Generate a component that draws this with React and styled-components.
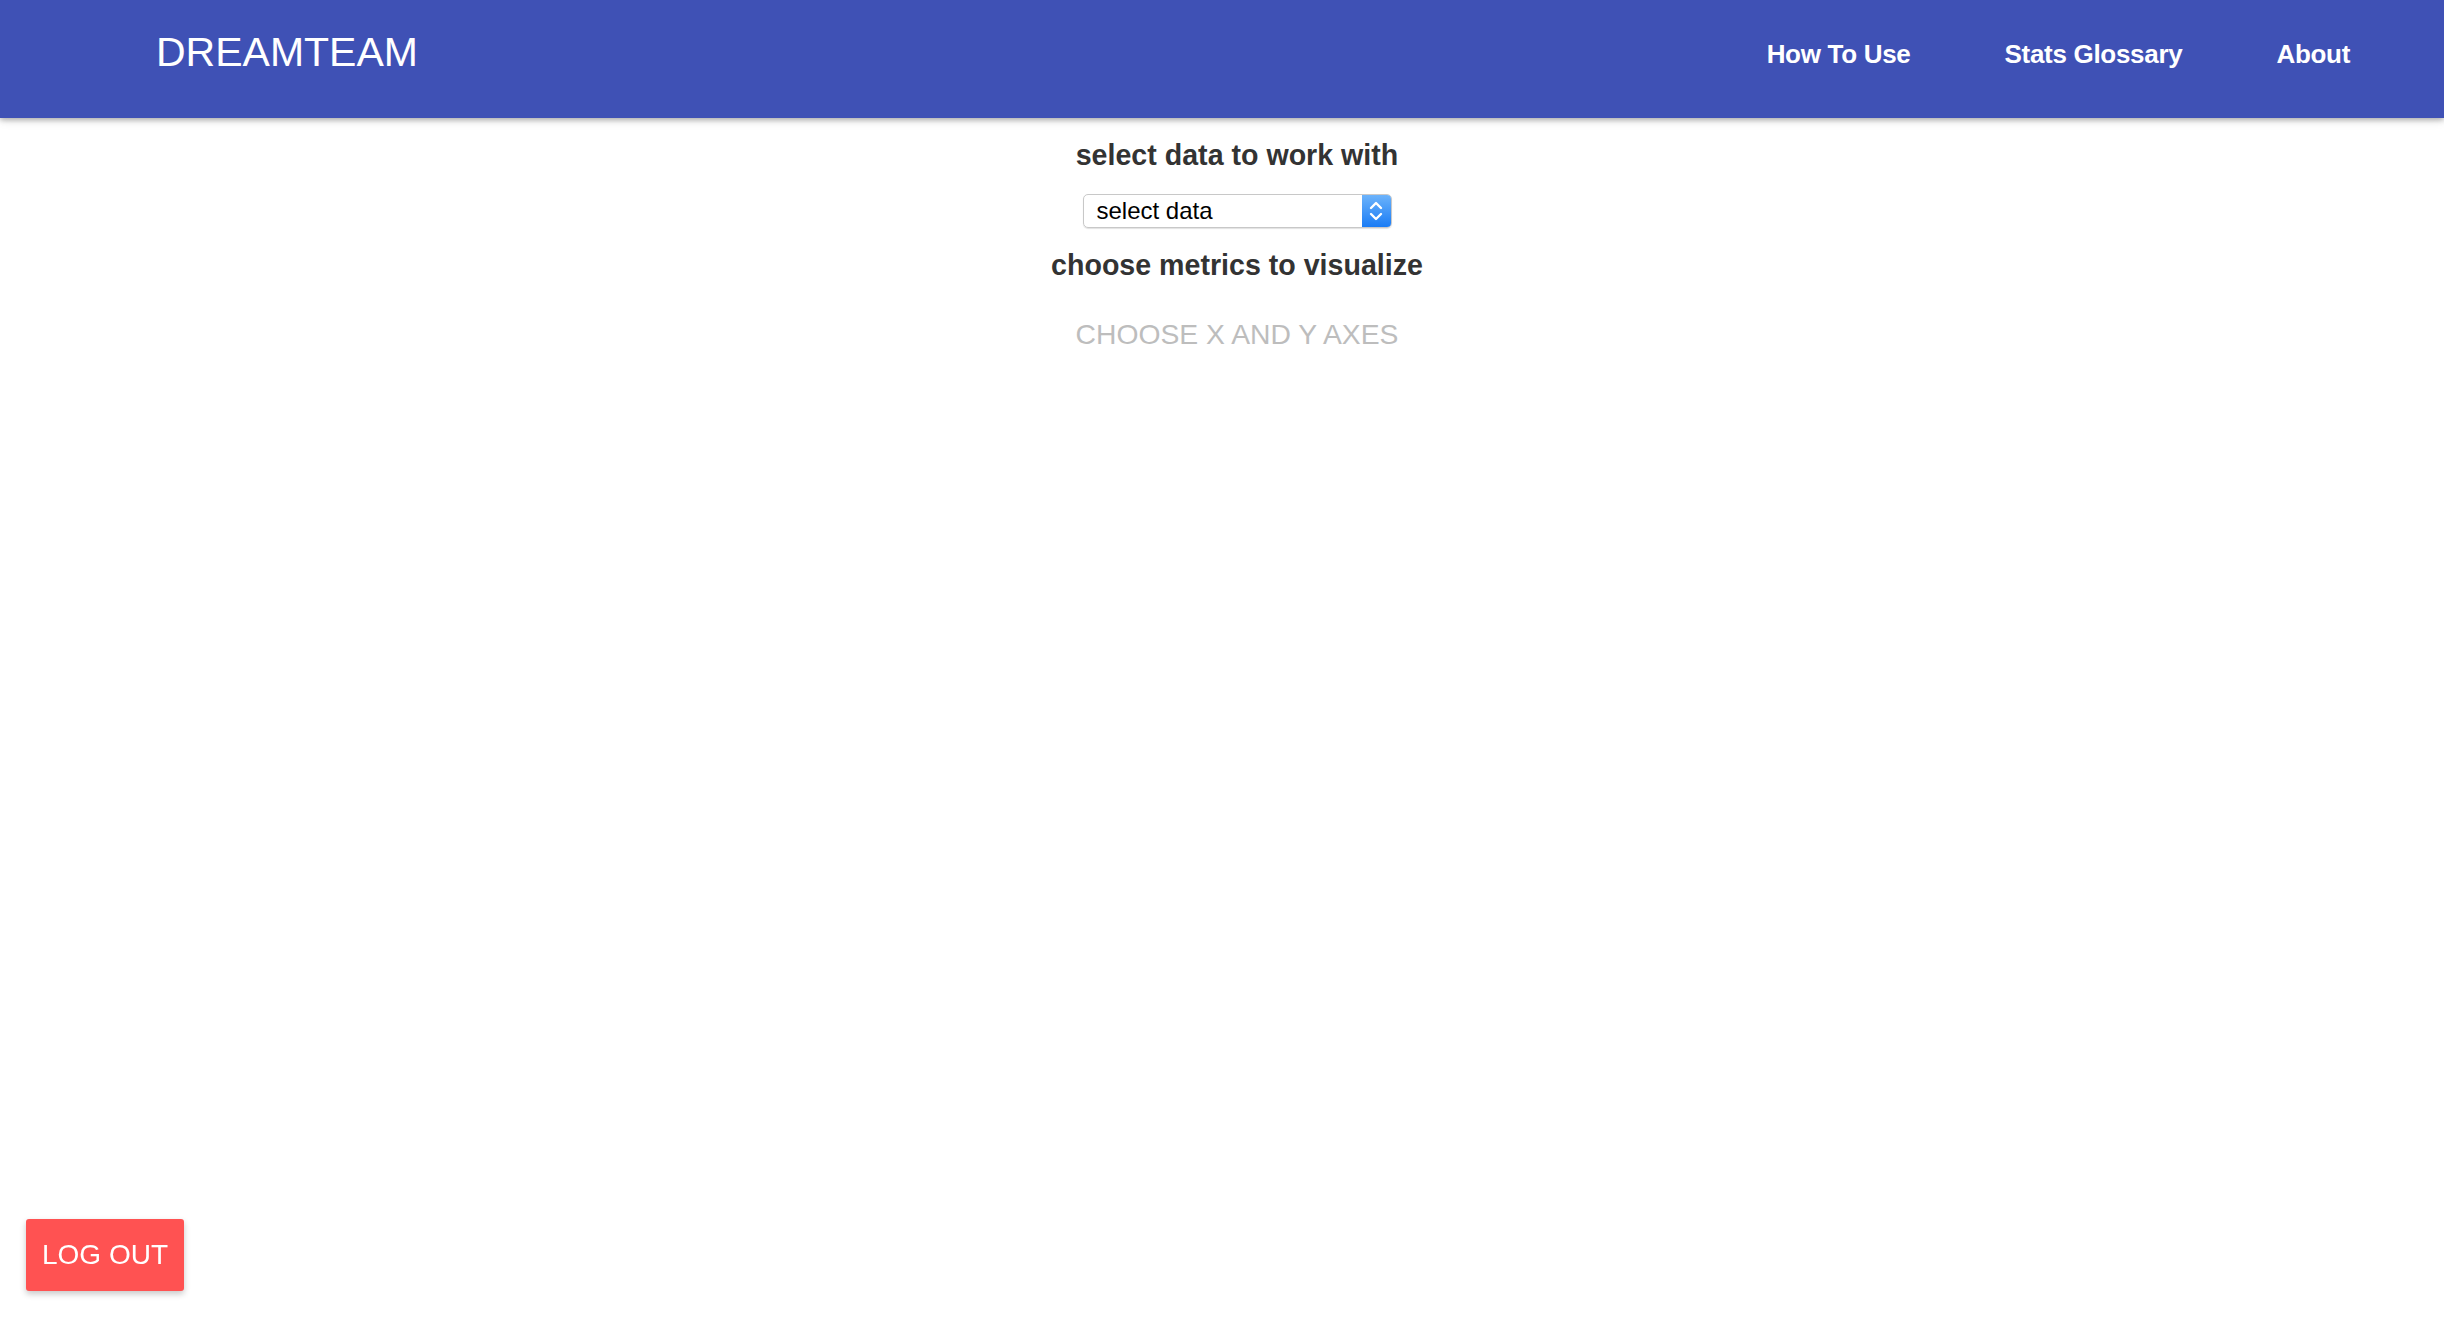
import React from "react";
import styled, { createGlobalStyle } from "styled-components";

const GlobalStyle = createGlobalStyle`
  html, body {
    margin: 0;
    padding: 0;
    background: #fff;
    font-family: "Liberation Sans", Arial, Helvetica, sans-serif;
  }
`;

const Nav = styled.nav`
  height: 118px;
  background-color: #3f51b5;
  box-shadow: 0 2px 5px rgba(0, 0, 0, 0.26), 0 2px 10px rgba(0, 0, 0, 0.12);
  display: flex;
  align-items: center;
  justify-content: space-between;
  padding: 0 47px 0 156px;
  color: #fff;
`;

const Brand = styled.a`
  font-size: 41px;
  color: #fff;
  text-decoration: none;
  margin-top: -14px;
`;

const Links = styled.ul`
  display: flex;
  list-style: none;
  margin: -9px 0 0;
  padding: 0;
`;

const NavLink = styled.a`
  display: block;
  padding: 0 47px;
  font-size: 26px;
  font-weight: bold;
  color: #fff;
  text-decoration: none;
  letter-spacing: -0.3px;
`;

const Main = styled.main`
  display: flex;
  flex-direction: column;
  align-items: center;
  padding: 20px 0 0 30px;
  color: #333;
`;

const Heading = styled.h3`
  margin: 0;
  font-size: 28.6px;
  font-weight: bold;
  line-height: 34px;
  margin-bottom: ${p => p.gap || 0}px;
`;

const SelectBox = styled.div`
  width: 309px;
  height: 34px;
  box-sizing: border-box;
  border: 1px solid #c8c8c8;
  border-radius: 5px;
  display: flex;
  align-items: stretch;
  overflow: hidden;
  margin-bottom: 20px;
  box-shadow: 0 1px 1px rgba(0, 0, 0, 0.12);
`;

const SelectLabel = styled.span`
  flex: 1;
  font-size: 24px;
  color: #000;
  padding-left: 13px;
  line-height: 32px;
`;

const SelectArrow = styled.span`
  width: 29px;
  background: linear-gradient(to bottom, #6cb3fb, #1a7cf5);
  display: flex;
  align-items: center;
  justify-content: center;
`;

const Placeholder = styled.div`
  margin-top: 36px;
  font-size: 28.3px;
  color: #bdbdbd;
  text-transform: uppercase;
`;

const LogOut = styled.button`
  position: fixed;
  left: 26px;
  bottom: 41px;
  width: 158px;
  height: 72px;
  border: none;
  border-radius: 3px;
  background-color: #ff5252;
  color: #fff;
  font-family: "Liberation Sans", Arial, sans-serif;
  font-size: 28px;
  box-shadow: 0 3px 6px rgba(0, 0, 0, 0.22);
  padding: 0;
`;

const Chevrons = () => (
  <svg width="16" height="24" viewBox="0 0 16 24" fill="none" stroke="#fff" strokeWidth="2.4" strokeLinecap="round" strokeLinejoin="round">
    <polyline points="3,9 8,4 13,9" />
    <polyline points="3,15 8,20 13,15" />
  </svg>
);

const App = () => {
  return (
    <>
      <GlobalStyle />
      <Nav>
        <Brand href="#">DREAMTEAM</Brand>
        <Links>
          <li><NavLink href="#">How To Use</NavLink></li>
          <li><NavLink href="#">Stats Glossary</NavLink></li>
          <li><NavLink href="#">About</NavLink></li>
        </Links>
      </Nav>
      <Main>
        <Heading gap={22}>select data to work with</Heading>
        <SelectBox>
          <SelectLabel>select data</SelectLabel>
          <SelectArrow><Chevrons /></SelectArrow>
        </SelectBox>
        <Heading>choose metrics to visualize</Heading>
        <Placeholder>choose x and y axes</Placeholder>
      </Main>
      <LogOut>LOG OUT</LogOut>
    </>
  );
};

export default App;
